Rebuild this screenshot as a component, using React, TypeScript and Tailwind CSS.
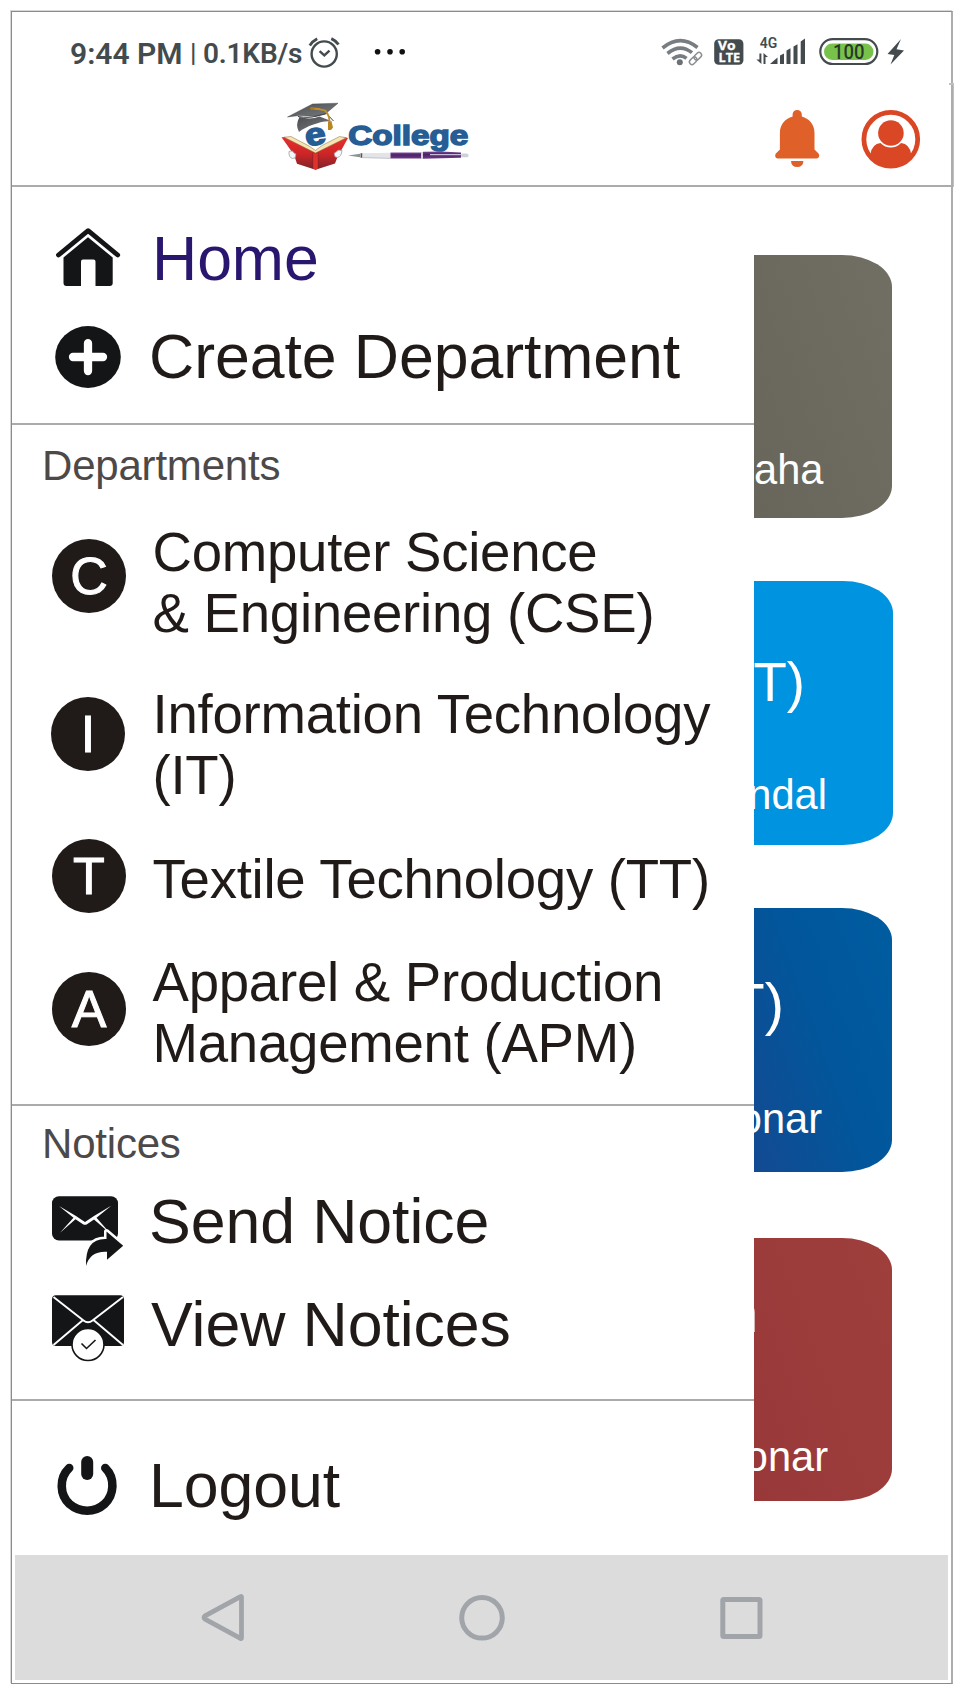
import React from "react";

const ink = "#131516";
const slate = "#434b4e";

function AlarmIcon() {
  return (
    <svg className="shrink-0" width="34" height="40" viewBox="307 32 34 40" fill="none" stroke={slate}>
      <circle cx="324.2" cy="54" r="12.6" strokeWidth="2.4" />
      <path d="M319.6 51.2l4.7 4.2 5.2-4.8" strokeWidth="2.4" />
      <path d="M309.800 45.400q2.600-4 7.400-6.600M338.500 44.600q-2.600-4-7.200-6" strokeWidth="2.800" />
    </svg>
  );
}

function DotsIcon() {
  return (
    <svg className="ml-[33px] shrink-0" width="34" height="40" viewBox="374 32 34 40" fill="#111">
      <circle cx="377.6" cy="51.700" r="2.8" />
      <circle cx="390" cy="51.700" r="2.8" />
      <circle cx="402.200" cy="51.700" r="2.8" />
    </svg>
  );
}

function WifiIcon() {
  return (
    <svg className="shrink-0" width="44" height="40" viewBox="660 32 44 40" fill="none">
      <g stroke="#777d80" strokeWidth="3.600">
        <path d="M662.500 48q17.500-14.500 35-.5" />
        <path d="M667.500 53.500q12.500-10.500 24.500-.8" />
        <path d="M672.500 59q7.500-6 14-.6" />
      </g>
      <circle cx="679.800" cy="62.300" r="3" fill="#6b7174" />
      <g stroke="#8c9092" strokeWidth="1.500" transform="rotate(-45 695.500 58.500)">
        <rect x="688" y="55.900" width="8.500" height="5.200" rx="2.600" fill="#fff" />
        <rect x="694.500" y="55.900" width="8.500" height="5.200" rx="2.600" />
      </g>
    </svg>
  );
}

function VolteIcon() {
  return (
    <svg className="ml-[8px] shrink-0" width="34" height="40" viewBox="712 32 34 40">
      <rect x="714.200" y="39.200" width="29.200" height="25.600" rx="4.500" fill={slate} />
      <g fill="#fff" stroke="#fff" strokeWidth=".3" fontFamily="'Open Sans', 'Noto Sans', sans-serif" fontWeight="700">
        <text x="718" y="50.400" fontSize="11.500" textLength="17.500" lengthAdjust="spacingAndGlyphs">Vo</text>
        <text x="718.500" y="62" fontSize="11.800" textLength="21.500" lengthAdjust="spacingAndGlyphs">LTE</text>
      </g>
    </svg>
  );
}

function SignalIcon() {
  return (
    <svg className="ml-[8px] shrink-0" width="54" height="40" viewBox="754 32 54 40" fill={slate}>
      <text x="759.800" y="47.700" fontSize="14.500" fontFamily="Roboto, sans-serif" fontWeight="600" textLength="17.500" lengthAdjust="spacingAndGlyphs">4G</text>
      <path d="M759.400 53.500h2V64l-5-4.500h3zM763.500 64h2v-7h2.500l-4.500-4z" />
      <path d="M770 64l7.500-6.500V64zM780 55.500l4-2V64h-4zM786.500 50.500l4-2.300V64h-4zM793.500 46.500l4-2.300V64h-4zM800.700 41.500l4.300-3V64h-4.300z" />
    </svg>
  );
}

function BatteryIcon() {
  return (
    <svg className="ml-[9px] shrink-0" width="63" height="40" viewBox="817 32 63 40">
      <rect x="820.300" y="39.200" width="57" height="24.800" rx="12.400" fill="#fff" stroke={slate} strokeWidth="2.200" />
      <rect x="824" y="43.500" width="49.500" height="16.500" rx="8.200" fill="#78c24b" />
      <text x="833" y="59.300" fontSize="20.500" fontFamily="Roboto, sans-serif" fontWeight="500" fill="#293a2a" textLength="31.500" lengthAdjust="spacingAndGlyphs">100</text>
    </svg>
  );
}

function BoltIcon() {
  return (
    <svg className="ml-[5px] shrink-0" width="22" height="40" viewBox="885 32 22 40" fill={slate}>
      <path d="M901 39l-13.500 15 6.800 1L890.500 64.500 904 50.500l-7.500-1.200z" />
    </svg>
  );
}

function Logo() {
  return (
    <svg className="shrink-0" width="192" height="76" viewBox="279 98 192 76">
      <defs>
        <linearGradient id="book" x1="0" y1="0" x2="0" y2="1">
          <stop offset="0" stopColor="#e5302b" />
          <stop offset=".5" stopColor="#cf2527" />
          <stop offset="1" stopColor="#7c2327" />
        </linearGradient>
        <linearGradient id="cap" x1="0" y1="0" x2="1" y2="1">
          <stop offset="0" stopColor="#4b4d50" />
          <stop offset="1" stopColor="#7b7e81" />
        </linearGradient>
        <linearGradient id="pen" x1="0" y1="0" x2="0" y2="1">
          <stop offset="0" stopColor="#7a4a97" />
          <stop offset=".4" stopColor="#4d2168" />
          <stop offset="1" stopColor="#6b3c86" />
        </linearGradient>
      </defs>
      <path d="M281.500 137.200l6-.2 28 15.300 26-15.300 6.500 1-10.500 19-2.500 6.500-19.500 6.200-18.500-6-3-9z" fill="url(#book)" />
      <path d="M284 137.200l7-.7 18 9.500 6.500 4.500 6.500-5 17.500-9 7 1.200-31 15.300z" fill="#f5e5b4" stroke="#8a6a35" strokeWidth=".5" />
      <path d="M313 152.500l2.500 1.200 2.500-1.200v16l-2.500 1.200-2.500-1.200z" fill="#e0322c" />
      <path d="M312.800 152.500v16M318.200 152.500v16" stroke="#7e2024" strokeWidth=".5" />
      <path d="M289 151.500q4-1.500 5 1.500 3 1 1.500 3 .5 2.500-3 2.500-4-1-3.500-7zM342 150.500q-4-1.500-6 1.500-2.500 1-1.500 3 0 2.500 3 2.500 4-1 4.500-7z" fill="#f4f6f7" stroke="#9aa0a3" strokeWidth=".8" />
      <text x="305" y="145" fontFamily="'Liberation Sans', Arial, sans-serif" fontWeight="700" fontSize="31" fill="#265d95" stroke="#265d95" strokeWidth="1.600" textLength="20.500" lengthAdjust="spacingAndGlyphs" transform="rotate(-10 315 136)">e</text>
      <path d="M299.500 117q11 3 20-.5l13 5q-8-1.500-19 3-9 3-14.500 7.500-4-7 .5-15z" fill="url(#cap)" />
      <path d="M287.500 117l25-13 25.500-.8-13 11-9.500 2.300-16-1z" fill="url(#cap)" stroke="#35383a" strokeWidth=".4" />
      <path d="M298 116.500q11 2 18.500-.500l10-2.500 7 7.500" fill="none" stroke="#424548" strokeWidth="1" />
      <path d="M311 108.500q8 .2 14 2 4.500 4 4.500 12" fill="none" stroke="#c2902b" strokeWidth="1.800" />
      <ellipse cx="312.300" cy="108.500" rx="2.400" ry="1.400" fill="#a97717" />
      <path d="M328 121.500h3.500l1.500 6-2 2.500h-3z" fill="#b98722" />
      <text x="348.300" y="145.300" fontFamily="'Liberation Sans', Arial, sans-serif" fontWeight="700" fontSize="27" fill="#265d95" stroke="#265d95" strokeWidth="1.500" textLength="120" lengthAdjust="spacingAndGlyphs">College</text>
      <path d="M348 155.500l12-1.800v3.500z" fill="#8d9192" />
      <rect x="360.500" y="153.200" width="2" height="4.600" fill="#55585a" />
      <path d="M362.500 153.200l28-.5v5.800l-28-.7z" fill="#e3e4e8" />
      <path d="M362.500 157.600l28 .8" stroke="#b9b7c2" strokeWidth=".8" />
      <rect x="390.500" y="152.500" width="31" height="6" fill="url(#pen)" />
      <rect x="421" y="152" width="2" height="7" fill="#d5d0dd" />
      <path d="M423 151.800l18-.4 20 1v5.400l-38 1z" fill="url(#pen)" />
      <path d="M430 154.700h31" stroke="#e6dfee" strokeWidth="1" />
      <rect x="461" y="153.500" width="7.500" height="3.800" rx="1.500" fill="#cfd1d6" />
    </svg>
  );
}

function BellIcon() {
  return (
    <svg className="shrink-0" width="46" height="60" viewBox="774 108 46 60" fill="#e06029">
      <path d="M797.200 109c2.700 0 4.600 2 4.600 4.600v2c7.200 2 12.700 8 12.700 16.400v16.500l4 4c1.500 2 .5 5-2 5h-38.600c-2.500 0-3.500-3-2-5l4-4V132c0-8.400 5.500-14.400 12.700-16.400v-2c0-2.600 1.900-4.600 4.600-4.600z" />
      <path d="M791 160h12.400q-.4 6-6.200 6t-6.200-6z" />
    </svg>
  );
}

function UserIcon() {
  return (
    <svg className="ml-[41px] shrink-0" width="60" height="60" viewBox="861 109 60 60">
      <circle cx="890.800" cy="139.200" r="26.900" fill="#fff" stroke="#da4725" strokeWidth="4.800" />
      <path d="M870.500 154q1.500-10 10-11 4.500 4.500 10.300 4.500t10.300-4.500q8.500 1 10 11-7 12.500-20.300 12.500T870.500 154z" fill="#da4725" />
      <circle cx="890.900" cy="133" r="12.800" fill="#da4725" />
    </svg>
  );
}

function HomeIcon() {
  return (
    <svg className="mt-[4px] shrink-0" width="68" height="62" viewBox="54 225 68 62">
      <path d="M58.500 254l29.600-24.300L117.700 254" fill="none" stroke={ink} strokeWidth="4.800" strokeLinecap="round" strokeLinejoin="round" />
      <path d="M88 236.200l24.700 20.300v25.500q0 3-3 3H95.500v-24.500q0-2-2-2H83q-2 0-2 2V285H66.500q-3 0-3-3v-25.500z" fill={ink} />
    </svg>
  );
}

function PlusIcon() {
  return (
    <svg className="mt-[4px] shrink-0" width="68" height="66" viewBox="54 324 68 66">
      <ellipse cx="88" cy="357" rx="32.800" ry="30.900" fill={ink} />
      <path d="M88 343.200v27.800M73 357h30" stroke="#fff" strokeWidth="8.300" strokeLinecap="round" />
    </svg>
  );
}

function SendIcon() {
  return (
    <svg className="mt-[10px] shrink-0" width="76" height="72" viewBox="50 1195 76 72">
      <rect x="52" y="1196.300" width="66" height="44.200" rx="7" fill={ink} />
      <path d="M59 1206l17 10q5 3.500 9 6l9-6 17.500-10.500-15 12.200 14 16-16.500-14.200-7 4.700q-2 1.200-4 0l-7.500-5-15.500 13.500 13.500-15z" fill="#fff" />
      <path d="M86 1266q-1-28 20.500-27v-7.500l16.700 14.200-16.200 14v-8q-17-1-21 14.300z" fill={ink} stroke="#fff" strokeWidth="5" strokeLinejoin="round" />
      <path d="M86 1266q-1-28 20.500-27v-7.500l16.700 14.200-16.200 14v-8q-17-1-21 14.300z" fill={ink} />
    </svg>
  );
}

function ViewIcon() {
  return (
    <svg className="mt-[6px] shrink-0" width="76" height="70" viewBox="50 1293 76 70">
      <rect x="52" y="1294.300" width="72" height="50.700" rx="4" fill={ink} />
      <path d="M53.500 1296l30 23.500q4.500 3.500 9 0L123 1296M53.500 1344l29.500-25M123 1344l-29.500-25" fill="none" stroke="#fff" strokeWidth="1.900" />
      <circle cx="88" cy="1343.500" r="16" fill="#fff" stroke={ink} strokeWidth="1.600" />
      <path d="M81.500 1342.500l5 5 9-8.500" fill="none" stroke={ink} strokeWidth="1.600" />
    </svg>
  );
}

function PowerIcon() {
  return (
    <svg className="mt-[5px] shrink-0" width="66" height="64" viewBox="55 1453 66 64" fill="none" stroke={ink} strokeLinecap="round">
      <path d="M69.200 1467c-10.500 10-9.500 27 .3 36 10.500 9 25 9 35 0 9.800-9 11-26 .8-36" strokeWidth="8.600" />
      <path d="M87.200 1461v12" strokeWidth="12" />
    </svg>
  );
}

function MenuRow({ icon, label, className, textClass }: { icon: React.ReactNode; label: string; className: string; textClass: string }) {
  return (
    <div className={`flex h-[72px] items-start ${className}`}>
      <span className="flex w-[94px] shrink-0">{icon}</span>
      <span className={`text-[62.6px] leading-[72px] tracking-[-0.07px] whitespace-nowrap ${textClass}`}>{label}</span>
    </div>
  );
}

function DeptRow({ letter, lines, className, badge }: { letter: string; lines: string[]; className: string; badge: string }) {
  return (
    <div className={`flex items-start pl-[40px] ${className}`}>
      <span className={`flex size-[74px] shrink-0 items-center justify-center rounded-full bg-[#201a18] text-[52px] leading-none text-white [-webkit-text-stroke:1px_white] ${badge}`}>{letter}</span>
      <span className="flex flex-col pt-px pl-[26.5px] text-[54.6px] leading-[60.5px] tracking-[-0.26px] whitespace-nowrap">
        {lines.map((l) => (
          <span key={l}>{l}</span>
        ))}
      </span>
    </div>
  );
}

function Card({ title, name, className, titleClass, nameClass }: { title: string; name: string; className: string; titleClass: string; nameClass: string }) {
  return (
    <div className={`flex h-[263.5px] shrink-0 flex-col items-end overflow-hidden rounded-r-[50px_32px] text-white ${className}`}>
      <span className={`h-[60px] leading-[60px] whitespace-nowrap ${titleClass}`}>{title}</span>
      <span className={`mt-auto h-[48px] text-[41.6px] leading-[48px] whitespace-nowrap ${nameClass}`}>{name}</span>
    </div>
  );
}

export default function App() {
  return (
    <div className="h-[1695px] w-[963px] overflow-hidden bg-white pt-[11px] pl-[11px] font-['Liberation_Sans',Arial,sans-serif] text-[#201a18]">
      <div className="relative flex h-[1673px] w-[942px] flex-col border border-r-2 border-[#8b8b8b] border-r-[#adadad] shadow-[-1px_-1px_0_#d8d8d8]">
        <div className="absolute top-[71px] -right-[3px] h-[104px] w-[5px] border-t-2 border-r border-[#c0c0c0]" />

        <div className="flex h-[72px] shrink-0 items-start pt-[20px] font-['Roboto',sans-serif] font-semibold text-[#434b4e]">
          <span className="ml-[58px] w-[120px] shrink-0 text-[30px] leading-[43px] whitespace-nowrap">9:44 PM</span>
          <span className="w-[13px] shrink-0 text-[26px] leading-[42px] font-medium">|</span>
          <span className="w-[104px] shrink-0 text-[28px] leading-[43px] tracking-[-0.2px] whitespace-nowrap">0.1KB/s</span>
          <AlarmIcon />
          <DotsIcon />
          <div className="ml-[252px] flex">
            <WifiIcon />
            <VolteIcon />
            <SignalIcon />
            <BatteryIcon />
            <BoltIcon />
          </div>
        </div>

        <header className="flex h-[103px] shrink-0 items-start border-b-2 border-[#ababab] pt-[14px] pl-[267px]">
          <Logo />
          <div className="mt-[11px] ml-[303px] flex">
            <BellIcon />
            <UserIcon />
          </div>
        </header>

        <div className="flex h-[1368px] shrink-0">
          <nav className="flex w-[742px] shrink-0 flex-col bg-white">
            <section className="h-[238px] shrink-0 border-b-2 border-[#ababab] pt-[35px]">
              <MenuRow icon={<HomeIcon />} label="Home" className="pl-[42px]" textClass="pl-[4px] text-[#29166f]" />
              <MenuRow icon={<PlusIcon />} label="Create Department" className="mt-[26px] pl-[42px]" textClass="pl-[1px]" />
            </section>

            <section className="h-[681px] shrink-0 border-b-2 border-[#ababab] pt-[17px]">
              <h2 className="h-[48px] pl-[30px] text-[42px] leading-[48px] tracking-[-0.2px] text-[#4d4948]">Departments</h2>
              <DeptRow letter="C" lines={["Computer Science", "& Engineering (CSE)"]} className="mt-[32px] h-[121px]" badge="mt-[17px]" />
              <DeptRow letter="I" lines={["Information Technology", "(IT)"]} className="mt-[41px] h-[121px]" badge="-ml-px mr-px mt-[13px]" />
              <DeptRow letter="T" lines={["Textile Technology (TT)"]} className="mt-[44px] h-[64px]" badge="-mt-[10px]" />
              <DeptRow letter="A" lines={["Apparel & Production", "Management (APM)"]} className="mt-[39px] h-[121px]" badge="mt-[20px]" />
            </section>

            <section className="h-[295px] shrink-0 border-b-2 border-[#ababab] pt-[14px]">
              <h2 className="h-[48px] pl-[30px] text-[42px] leading-[48px] tracking-[-0.2px] text-[#4d4948]">Notices</h2>
              <MenuRow icon={<SendIcon />} label="Send Notice" className="mt-[17px] pl-[38px]" textClass="pl-[5px]" />
              <MenuRow icon={<ViewIcon />} label="View Notices" className="mt-[31px] pl-[38px]" textClass="pl-[7px]" />
            </section>

            <section className="pt-[48px]">
              <MenuRow icon={<PowerIcon />} label="Logout" className="pl-[43px]" textClass="" />
            </section>
          </nav>

          <main className="flex w-[139px] shrink-0 flex-col overflow-hidden pt-[67.5px]">
            <Card title="" name="aha" className="mr-px bg-linear-[70deg] from-[#68665a] to-[#716f63]" titleClass="" nameClass="mb-[24px] pr-[68.5px]" />
            <Card title="T)" name="ndal" className="mt-[63px] bg-[#0093e0]" titleClass="mt-[72px] pr-[88px] text-[54.6px]" nameClass="mb-[26px] pr-[66px]" />
            <Card title="T)" name="onar" className="mt-[63.5px] mr-px bg-linear-[70deg] from-[#134a92] via-[#02569b] to-[#005ca0]" titleClass="mt-[66px] pr-[108px] text-[58px]" nameClass="mb-[29px] pr-[70px]" />
            <Card title="n" name="onar" className="mt-[66px] mr-px bg-linear-[70deg] from-[#993839] to-[#9e3f3c]" titleClass="mt-[46px] pr-[134px] text-[54.6px]" nameClass="mb-[20px] pr-[64px]" />
          </main>
        </div>

        <footer className="mx-[3px] flex h-[125px] shrink-0 items-center bg-[#dcdcdc]">
          <svg className="ml-[185px] shrink-0" width="46" height="50" viewBox="200 1593 46 50" fill="none" stroke="#a1a5a9" strokeWidth="4.800" strokeLinejoin="round">
            <path d="M241.500 1597v41q0 1-1 .4l-35.500-19.200q-2-1.700 0-3.400l35.500-19.200q1-.6 1 .4z" />
          </svg>
          <svg className="ml-[211px] shrink-0" width="50" height="50" viewBox="457 1593 50 50" fill="none" stroke="#a1a5a9" strokeWidth="5">
            <circle cx="482" cy="1617.800" r="20.300" />
          </svg>
          <svg className="ml-[211px] shrink-0" width="48" height="50" viewBox="718 1593 48 50" fill="none" stroke="#a1a5a9" strokeWidth="5">
            <rect x="722.800" y="1599.500" width="37.200" height="37" rx="1" />
          </svg>
        </footer>
      </div>
    </div>
  );
}
